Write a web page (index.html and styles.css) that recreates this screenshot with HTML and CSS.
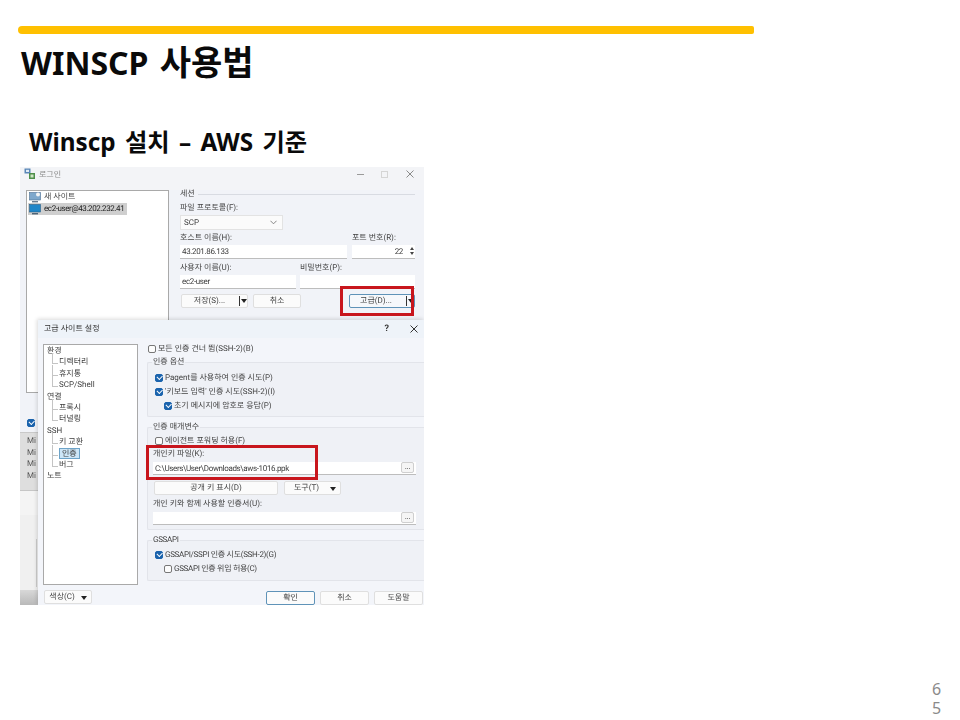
FILE: index.html
```html
<!DOCTYPE html>
<html lang="ko">
<head>
<meta charset="utf-8">
<title>WINSCP 사용법</title>
<link rel="stylesheet" href="styles.css">
</head>
<body>
<main class="slide">
  <div class="accent"></div>
  <h1 class="title">WINSCP <span class="ko">사용법</span></h1>
  <h2 class="subtitle">Winscp 설치 – AWS 기준</h2>

  <section class="shot">
    <div class="backdrop">
      <div class="log">
        <div>Mi</div><div>Mi</div><div>Mi</div><div>Mi</div>
      </div>
      <div class="pane-white"></div>
      <div class="pane-light"><span class="scroll"></span></div>
      <div class="pane-gray"></div>
    </div>

    <div class="win login">
      <header class="bar">
        <svg class="app" viewBox="0 0 12 12" width="12" height="12"><rect x="0.5" y="0.5" width="6" height="5" fill="#5b87b8"/><rect x="2" y="1.8" width="3" height="2.2" fill="#dfeaf5"/><rect x="5" y="5" width="6" height="6" fill="#4f8f4b"/><rect x="6.5" y="6.5" width="3" height="3" fill="#cfe6c6"/></svg>
        <span class="bar-title">로그인</span>
        <span class="ctl ctl-min"></span>
        <span class="ctl ctl-max"></span>
        <svg class="ctl-x" viewBox="0 0 8 8" width="8" height="8"><path d="M0.5 0.5L7.5 7.5M7.5 0.5L0.5 7.5" stroke="#8a8a8a" fill="none"/></svg>
      </header>
      <div class="login-body">
        <div class="left">
          <div class="sites">
            <div class="site">
              <svg viewBox="0 0 12 11" width="12" height="11"><rect x="0.5" y="0.5" width="11" height="7.5" fill="#7fa8cc" stroke="#4b6f92" stroke-width="0.6"/><circle cx="9" cy="2.5" r="2" fill="#f4f4f4"/><rect x="3" y="9" width="6" height="1.4" fill="#6a7d90"/></svg>
              <span>새 사이트</span>
            </div>
            <div class="site site-on">
              <svg viewBox="0 0 12 11" width="12" height="11"><rect x="0.5" y="0.5" width="11" height="7.5" fill="#1f86c8" stroke="#2a5f88" stroke-width="0.6"/><rect x="3" y="9" width="6" height="1.4" fill="#4c6478"/></svg>
              <span>ec2-user@43.202.232.41</span>
            </div>
          </div>
          <span class="cb cb-on login-cb"></span>
        </div>
        <div class="session">
          <div class="legend"><span>세션</span><i></i></div>
          <label class="lbl lbl-first">파일 프로토콜(F):</label>
          <div class="select">SCP
            <svg viewBox="0 0 8 5" width="7" height="5"><path d="M0.5 0.5L4 4L7.5 0.5" fill="none" stroke="#777"/></svg>
          </div>
          <div class="row row-host">
            <div class="f-host"><label class="lbl">호스트 이름(H):</label><div class="input">43.201.86.133</div></div>
            <div class="f-port"><label class="lbl">포트 번호(R):</label><div class="input input-num">22<span class="spin"></span></div></div>
          </div>
          <div class="row row-user">
            <div class="f-user"><label class="lbl">사용자 이름(U):</label><div class="input">ec2-user</div></div>
            <div class="f-pass"><label class="lbl">비밀번호(P):</label><div class="input"></div></div>
          </div>
          <div class="row row-btns">
            <div class="btn btn-save">저장(S)...<span class="split"></span></div>
            <div class="btn btn-cancel">취소</div>
            <div class="btn btn-adv">고급(D)...<span class="split"></span></div>
          </div>
        </div>
      </div>
    </div>

    <div class="win dialog">
      <header class="dlg-bar">
        <span class="dlg-title">고급 사이트 설정</span>
        <span class="help">?</span>
        <svg viewBox="0 0 8 8" width="8" height="8"><path d="M0.5 0.5L7.5 7.5M7.5 0.5L0.5 7.5" stroke="#333" fill="none"/></svg>
      </header>
      <div class="dlg-main">
        <div class="dlg-left">
          <ul class="tree">
            <li>환경</li>
            <li class="sub">디렉터리</li>
            <li class="sub">휴지통</li>
            <li class="sub">SCP/Shell</li>
            <li>연결</li>
            <li class="sub">프록시</li>
            <li class="sub">터널링</li>
            <li>SSH</li>
            <li class="sub">키 교환</li>
            <li class="sub"><b class="tree-on">인증</b></li>
            <li class="sub">버그</li>
            <li>노트</li>
          </ul>
          <div class="btn btn-color">색상(C)<span class="caret"></span></div>
        </div>
        <div class="dlg-right">
          <div class="check check-top"><span class="cb"></span>모든 인증 건너 뜀(SSH-2)(B)</div>
          <fieldset class="group g-options">
            <legend>인증 옵션</legend>
            <div class="check"><span class="cb cb-on"></span>Pagent를 사용하여 인증 시도(P)</div>
            <div class="check"><span class="cb cb-on"></span>'키보드 입력' 인증 시도(SSH-2)(I)</div>
            <div class="check indent"><span class="cb cb-on"></span>초기 메시지에 암호로 응답(P)</div>
          </fieldset>
          <fieldset class="group g-params">
            <legend>인증 매개변수</legend>
            <div class="check"><span class="cb"></span>에이전트 포워딩 허용(F)</div>
            <label class="lbl lbl-key">개인키 파일(K):</label>
            <div class="input input-path">C:\Users\User\Downloads\aws-1016.ppk<span class="dots">...</span></div>
            <div class="row row-key">
              <div class="btn btn-pub">공개 키 표시(D)</div>
              <div class="btn btn-tool">도구(T)<span class="caret"></span></div>
            </div>
            <label class="lbl lbl-cert">개인 키와 함께 사용할 인증서(U):</label>
            <div class="input input-path"><span class="dots">...</span></div>
          </fieldset>
          <fieldset class="group g-gss">
            <legend>GSSAPI</legend>
            <div class="check"><span class="cb cb-on"></span>GSSAPI/SSPI 인증 시도(SSH-2)(G)</div>
            <div class="check indent"><span class="cb"></span>GSSAPI 인증 위임 허용(C)</div>
          </fieldset>
          <div class="row row-actions">
            <div class="btn btn-ok">확인</div>
            <div class="btn btn-act">취소</div>
            <div class="btn btn-act">도움말</div>
          </div>
        </div>
      </div>
    </div>

    <div class="mark mark-adv"></div>
    <div class="mark mark-key"></div>
  </section>

  <div class="page">65</div>
</main>
</body>
</html>
```
FILE: styles.css
```css
* { box-sizing: border-box; }
html, body { margin: 0; padding: 0; background: #fff; }
body { font-family: "Noto Sans", "Noto Sans CJK KR", sans-serif; color: #000; }

.slide { position: relative; width: 960px; height: 720px; padding: 26px 0 0 18px; overflow: hidden; }
.accent { width: 736px; height: 8px; background: #ffc000; border-radius: 4px 2px 2px 4px; }
.title { height: 44px; margin: 6px 0 0 3px; font-size: 32px; line-height: 44px; font-weight: 700; word-spacing: 3px; color: #0a0a0a; }
.ko { font-size: 34px; }
.subtitle { height: 32px; margin: 42px 0 0 11px; font-size: 24.3px; line-height: 32px; font-weight: 700; word-spacing: 3px; color: #0a0a0a; }

.shot { position: relative; width: 404px; height: 438px; margin: 9px 0 0 2px; overflow: hidden; font-family: Roboto, "Noto Sans CJK KR", sans-serif; font-size: 8px; line-height: 10px; color: #3c3c3c; filter: blur(0.35px); text-rendering: geometricPrecision; }

/* backdrop of the photographed desktop */
.backdrop { position: absolute; inset: 265px 0 0 0; display: flex; flex-direction: column; background: #dcdcdc; }
.log { height: 58px; padding: 2px 0 0 7px; background: #dedede; border-top: 1px solid #c9c9c9; }
.log div { height: 11.6px; line-height: 12px; font-size: 8px; color: #555; }
.pane-white { height: 25px; background: #f4f4f4; border-top: 1px solid #c6c6c6; }
.pane-light { position: relative; height: 75px; background: #f0f0f0; }
.scroll { display: block; width: 1px; height: 48px; margin: 24px 0 0 16px; background: #ccc; }
.pane-gray { flex: 1; background: linear-gradient(#d8d8d8, #b9b9b9); }

/* windows laid on the desktop */
.win { position: absolute; }
.login { top: 0; left: 0; width: 404px; height: 265px; background: #f1f3f8; }
.bar { display: flex; align-items: center; height: 23px; padding: 0 10px 0 4px; background: #f3f4f7; }
.app { margin-top: -9px; }
.bar-title { margin: -8px 0 0 3px; color: #8b8b8b; font-size: 8px; }
.ctl { display: block; margin-top: -9px; }
.ctl-min { width: 7px; height: 1px; margin-left: auto; background: #9a9a9a; }
.ctl-max { width: 7px; height: 7px; margin-left: 17px; border: 1px solid #d5d5d5; }
.ctl-x { margin: -9px 0 0 18px; }

.login-body { display: flex; align-items: flex-start; }
.left { width: 160px; padding-left: 6px; }
.sites { width: 143px; height: 203px; padding: 0 1px; background: #fff; border: 1px solid #a9a9a9; }
.site { display: flex; align-items: center; gap: 3px; height: 12px; padding-left: 1px; color: #444; }
.site svg { flex: none; }
.site-on { width: 99px; background: #cfcfcf; color: #222; white-space: nowrap; letter-spacing: -0.4px; }
.login-cb { display: block; margin: 26px 0 0 1px; }

.session { width: 235px; }
.legend { display: flex; align-items: center; height: 10px; margin-top: -1px; }
.legend i { flex: 1; height: 1px; margin-left: 3px; background: #d8dbe2; }
.lbl { display: block; height: 10px; white-space: nowrap; color: #444; }
.lbl-first { margin-top: 4px; }
.select { display: flex; align-items: center; justify-content: space-between; width: 103px; height: 15px; margin-top: 2px; padding: 0 5px 0 3px; background: #fbfbfb; border: 1px solid #e3e3e3; }
.input { position: relative; height: 14px; margin-top: 2px; padding-left: 2px; line-height: 14px; background: #fff; border-bottom: 1px solid #bdbdbd; white-space: nowrap; letter-spacing: -0.35px; }
.input-num { padding-right: 12px; text-align: right; }
.spin { position: absolute; top: 3px; right: 3px; width: 0; height: 8px; }
.spin::before, .spin::after { content: ""; position: absolute; left: -2px; border: 2px solid transparent; }
.spin::before { top: -1px; border-top: 0; border-bottom: 3px solid #444; }
.spin::after { top: 4px; border-bottom: 0; border-top: 3px solid #444; }
.row { display: flex; }
.row-host { margin-top: 3px; gap: 5px; }
.f-host { width: 167px; }
.f-port { width: 63px; }
.row-user { margin-top: 4px; gap: 4px; }
.f-user { width: 116px; }
.f-pass { width: 115px; }
.row-btns { margin: 5px 0 0 1px; }

.btn { position: relative; display: flex; align-items: center; justify-content: center; height: 14px; background: #fbfbfb; border: 1px solid #dfdfdf; border-radius: 2px; white-space: nowrap; color: #444; }
.btn-save { width: 67px; padding-right: 10px; }
.btn-cancel { width: 48px; margin-left: 5px; }
.btn-adv { width: 66px; margin-left: 48px; padding-right: 12px; border-color: #5f93b8; background: #f6f8fb; }
.split { position: absolute; top: 1px; right: 0; width: 8px; height: 10px; border-left: 1px solid #333; }
.split::after { content: ""; position: absolute; top: 3px; left: 1px; border: 3px solid transparent; border-top: 4px solid #222; border-bottom: 0; }

/* advanced dialog */
.dialog { top: 153px; left: 18px; width: 386px; height: 285px; background: #f3f5fa; box-shadow: -1px -1px 4px rgba(0, 0, 0, .15); }
.dlg-bar { display: flex; align-items: center; height: 18px; padding: 0 6px 0 6px; background: #eef3f9; }
.dlg-title { color: #333; }
.help { margin: 0 21px 0 auto; font-weight: 700; font-size: 9px; color: #333; }
.dlg-main { display: flex; }
.dlg-left { width: 105px; padding: 6px 0 0 5px; }
.tree { width: 95px; height: 241px; margin: 0; padding: 1px 0 0 3px; list-style: none; background: #fff; border: 1px solid #a9a9a9; }
.tree li { position: relative; height: 11.4px; line-height: 10px; white-space: nowrap; }
.tree .sub { padding-left: 12px; }
.tree .sub::before { content: ""; position: absolute; left: 5px; top: -4px; width: 5px; height: 10px; border-left: 1px solid #c4c4c4; border-bottom: 1px solid #c4c4c4; }
.tree-on { font-weight: 400; padding: 0 2px; background: #cde6f7; border: 1px solid #6da3c8; }
.btn-color { width: 48px; margin: 5px 0 0 1px; padding-right: 12px; }
.caret { position: absolute; top: 5px; right: 4px; border: 3px solid transparent; border-top: 4px solid #222; border-bottom: 0; }

.dlg-right { width: 277px; padding: 6px 0 0 4px; }
.check { display: flex; align-items: center; gap: 2px; height: 14px; white-space: nowrap; color: #444; }
.check-top { height: 10px; margin-left: 1px; }
.indent { margin-left: 9px; }
.cb { display: block; position: relative; flex: none; width: 8px; height: 8px; background: #fcfcfc; border: 1px solid #777; border-radius: 2px; }
.cb-on { background: #1a63ad; border-color: #1a63ad; }
.cb-on::after { content: ""; position: absolute; left: 1px; top: 0; width: 4px; height: 2.5px; border-left: 1px solid #fff; border-bottom: 1px solid #fff; transform: rotate(-45deg); }

.group { margin: 0; padding: 0 0 0 7px; min-width: 0; width: 277px; border: 1px solid #e2e4ea; border-right: 0; border-radius: 2px 0 0 2px; background: #eff1f6; }
.group legend { margin-left: -3px; padding: 0 1px; height: 10px; line-height: 10px; color: #444; }
.g-options { height: 60px; margin-top: 3px; padding-top: 4px; }
.g-params { height: 108px; margin-top: 5px; padding-top: 2px; }
.g-gss { height: 46px; margin-top: 5px; padding-top: 3px; letter-spacing: -0.3px; }
.lbl-key { margin: 1px 0 0 -2px; }
.input-path { width: 263px; height: 13px; margin: 3px 0 0 -2px; line-height: 13px; }
.dots { position: absolute; top: 0; right: 2px; width: 13px; height: 11px; line-height: 7px; text-align: center; background: #f5f5f5; border: 1px solid #cfcfcf; border-radius: 2px; }
.row-key { margin: 6px 0 0 -1px; gap: 6px; }
.btn-pub { width: 124px; }
.btn-tool { width: 57px; padding-right: 12px; }
.lbl-cert { margin: 4px 0 0 -2px; }
.row-actions { justify-content: flex-end; gap: 5px; margin: 10px -3px 0 0; }
.btn-ok { width: 49px; border-color: #5f93b8; }
.btn-act { width: 49px; }

/* red callouts drawn over the picture */
.mark { position: absolute; border: 3px solid #c8161d; }
.mark-adv { left: 320px; top: 119px; width: 74px; height: 30px; }
.mark-key { left: 126px; top: 278px; width: 172px; height: 35px; }

.page { position: absolute; left: 932px; top: 680px; width: 11px; font-size: 16px; line-height: 19px; color: #8a8a8a; word-break: break-all; }
```
